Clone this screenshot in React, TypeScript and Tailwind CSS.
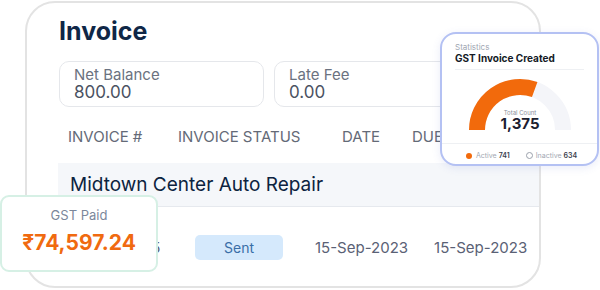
import React from 'react';

const font = { fontFamily: 'Inter, "Noto Sans", sans-serif' };

const StatBox: React.FC<{ label: string; value: string }> = ({ label, value }) => (
    <div className="w-[205px] h-[46px] shrink-0 rounded-[10px] border border-[#e5e7eb] pl-[14px] pt-[5px]">
        <div className="text-[15px] leading-[16px] text-[#6b7280]">{label}</div>
        <div className="text-[17px] leading-[19px] text-[#4b5262]">{value}</div>
    </div>
);

const StatsCard: React.FC = () => (
    <div className="absolute left-[440px] top-[32px] w-[159px] h-[134px] rounded-[16px] border-2 border-[#b4c1f3] bg-white shadow-[0_2px_8px_rgba(80,100,200,0.12)] overflow-hidden">
        <div className="px-[13px] pt-[8px]">
            <div className="text-[8px] leading-[10px] text-[#a0a6b2]">Statistics</div>
            <div className="text-[10px] leading-[13px] font-bold text-[#141a26] pb-[4px] border-b border-[#eef0f3]">GST Invoice Created</div>
        </div>
        <div className="relative h-[73px]">
            <svg width="155" height="73" viewBox="0 0 155 73" className="block">
                <path d="M 35 60 A 43 43 0 0 1 121 60" fill="none" stroke="#f4f5f9" strokeWidth="16" />
                <path d="M 35 60 A 43 43 0 0 1 92.7 19.6" fill="none" stroke="#f26a0c" strokeWidth="16" />
            </svg>
            <div className="absolute left-0 top-[39px] w-[156px] flex flex-col items-center">
                <div className="text-[6px] leading-[7px] text-[#8a909c]">Total Count</div>
                <div className="text-[15px] leading-[16px] font-bold text-[#1b2030]">1,375</div>
            </div>
        </div>
        <div className="border-t border-[#eef0f3] flex items-center h-[24px] pl-[24px] text-[7px] leading-[8px]">
            <span className="w-[6px] h-[6px] rounded-full bg-[#f26a0c]" />
            <span className="ml-[4px] text-[#a3a8b3]">Active</span>
            <span className="ml-[2px] font-semibold text-[#3a404d]">741</span>
            <span className="ml-[16px] w-[7px] h-[7px] rounded-full border border-[#9aa0aa]" />
            <span className="ml-[3px] text-[#a3a8b3]">Inactive</span>
            <span className="ml-[2px] font-semibold text-[#3a404d]">634</span>
        </div>
    </div>
);

const GstPaidCard: React.FC = () => (
    <div className="absolute left-0 top-[195px] w-[158px] h-[77px] rounded-[9px] border-2 border-[#d6f0e5] bg-white flex flex-col items-center pt-[9px]">
        <div className="text-[13px] leading-[18px] text-[#7b879b]">GST Paid</div>
        <div className="mt-[6px] text-[21px] leading-[26px] font-bold text-[#f06a10]">₹74,597.24</div>
    </div>
);

export default function App() {
    return (
        <div className="relative w-[600px] h-[290px] bg-white overflow-hidden" style={font}>
            <div className="ml-[25px] mt-[1px] w-[516px] h-[287px] rounded-[30px] border-2 border-[#e3e3e3] overflow-hidden pl-[32px] pt-[13px]">
                <div className="text-[25px] leading-[30px] font-bold text-[#0f2747]">Invoice</div>

                <div className="mt-[15px] flex gap-[10px]">
                    <StatBox label="Net Balance" value="800.00" />
                    <StatBox label="Late Fee" value="0.00" />
                </div>

                <div className="mt-[21px] flex text-[15px] leading-[18px] text-[#646a77] pl-[9px] whitespace-nowrap">
                    <div className="w-[110px]">INVOICE #</div>
                    <div className="w-[164px]">INVOICE STATUS</div>
                    <div className="w-[70px]">DATE</div>
                    <div>DUE DATE</div>
                </div>

                <div className="mt-[17px] -ml-[1px] w-[600px] h-[44px] bg-[#f5f7fa] border-b border-[#e6e9ee] flex items-center pl-[12px]">
                    <span className="text-[19px] leading-[24px] text-[#0c2340]">Midtown Center Auto Repair</span>
                </div>

                <div className="mt-[28px] -ml-[1px] flex items-center whitespace-nowrap text-[15px] leading-[18px] text-[#5a6175]">
                    <div className="w-[137px] pl-[14px]">INV-000045</div>
                    <div className="w-[88px] h-[25px] rounded-[5px] bg-[#d5e9fc] flex items-center justify-center text-[14px] text-[#3a6ea7]">Sent</div>
                    <div className="ml-[32px]">15-Sep-2023</div>
                    <div className="ml-[26px]">15-Sep-2023</div>
                </div>
            </div>

            <StatsCard />
            <GstPaidCard />
        </div>
    );
}
